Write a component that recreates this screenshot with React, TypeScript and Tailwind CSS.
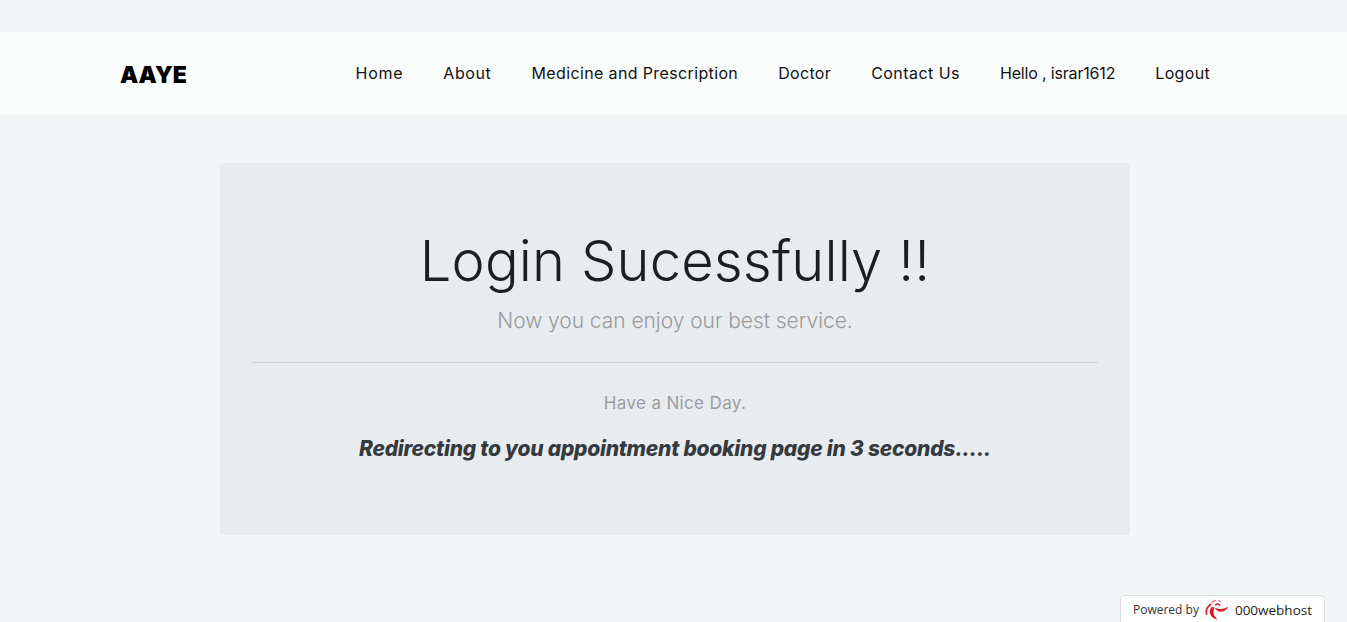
import React from 'react';

const links = [
  { label: 'Home', track: 'tracking-[0.75px]' },
  { label: 'About', track: 'tracking-[0.6px]' },
  { label: 'Medicine and Prescription', track: 'tracking-[0.37px]' },
  { label: 'Doctor', track: 'tracking-[0.33px]' },
  { label: 'Contact Us', track: 'tracking-[0.45px]' },
  { label: 'Hello , israr1612', track: 'tracking-[-0.17px]' },
  { label: 'Logout', track: 'tracking-[0.33px]' },
];

function WebhostLogo() {
  return (
    <svg width="24" height="22" viewBox="0 0 24 22" fill="none">
      <path d="M5.5 5.5 C2 8 .8 11.5 1.5 15" stroke="#e0252b" strokeWidth="1.8" strokeLinecap="round" />
      <path d="M10.5 1.5 C9 1.8 8 2.6 7 3.6" stroke="#ec7b7e" strokeWidth="1.3" strokeLinecap="round" />
      <path d="M6.5 8 C3 12.5 5 19 13 21 C8.5 17 7.5 13.5 9.5 8.5 Z" fill="#d9181f" />
      <path d="M9.5 8.5 C11 12.5 16 14 20 11.5 C21.7 10.4 22.7 9 23.2 7.4 C20 10 14 11 9.5 8.5 Z" fill="#e0252b" />
      <path d="M10.5 5.8 C11.8 4.8 13.5 4.9 14.8 6.2" stroke="#e0252b" strokeWidth="1.5" strokeLinecap="round" />
      <path d="M13.5 1.5 L15.5 2.5" stroke="#ec7b7e" strokeWidth="1.3" strokeLinecap="round" />
    </svg>
  );
}

export default function App() {
  return (
    <div className="relative h-[622px] overflow-hidden bg-[#f3f6f7] pt-8 font-['Inter',sans-serif]">
      <nav className="flex h-[83px] items-center bg-[#fafcfb] pl-[120px] pr-[137px]">
        <a className="mt-[3px] text-[23px] font-black leading-none text-black">AAYE</a>
        <ul className="ml-auto mb-[2px] flex gap-10 text-[16px] text-[#111]">
          {links.map((link) => (
            <li key={link.label} className={link.track}>{link.label}</li>
          ))}
        </ul>
      </nav>

      <main className="ml-[220px] mt-12 h-[372px] w-[910px] rounded bg-[#e9ecef] px-8 pt-[65px] text-center">
        <h1 className="text-[56px] font-light leading-[1.2] tracking-[0.15px] text-[#1c1e20]">Login Sucessfully !!</h1>
        <p className="mt-[10px] text-[21px] font-light tracking-[-0.05px] text-[#999b9d]">Now you can enjoy our best service.</p>
        <hr className="mt-[25px] border-[#ced1d4]" />
        <p className="mt-[28px] text-[17px] tracking-[0.35px] text-[#9c9d9f]">Have a Nice Day.</p>
        <p className="mt-[17px] text-[21px] font-extrabold italic tracking-[-0.23px] text-[#343a40]">Redirecting to you appointment booking page in 3 seconds.....</p>
      </main>

      <div className="absolute bottom-[-4px] right-[22px] flex h-[31px] w-[205px] items-center justify-center gap-[6px] rounded-t border border-[#dcdfe2] bg-white pb-[1px] font-['Open_Sans',sans-serif] text-[#333]">
        <span className="text-[12px]">Powered by</span>
        <WebhostLogo />
        <span className="text-[13.5px] font-medium text-[#222]">000webhost</span>
      </div>
    </div>
  );
}
